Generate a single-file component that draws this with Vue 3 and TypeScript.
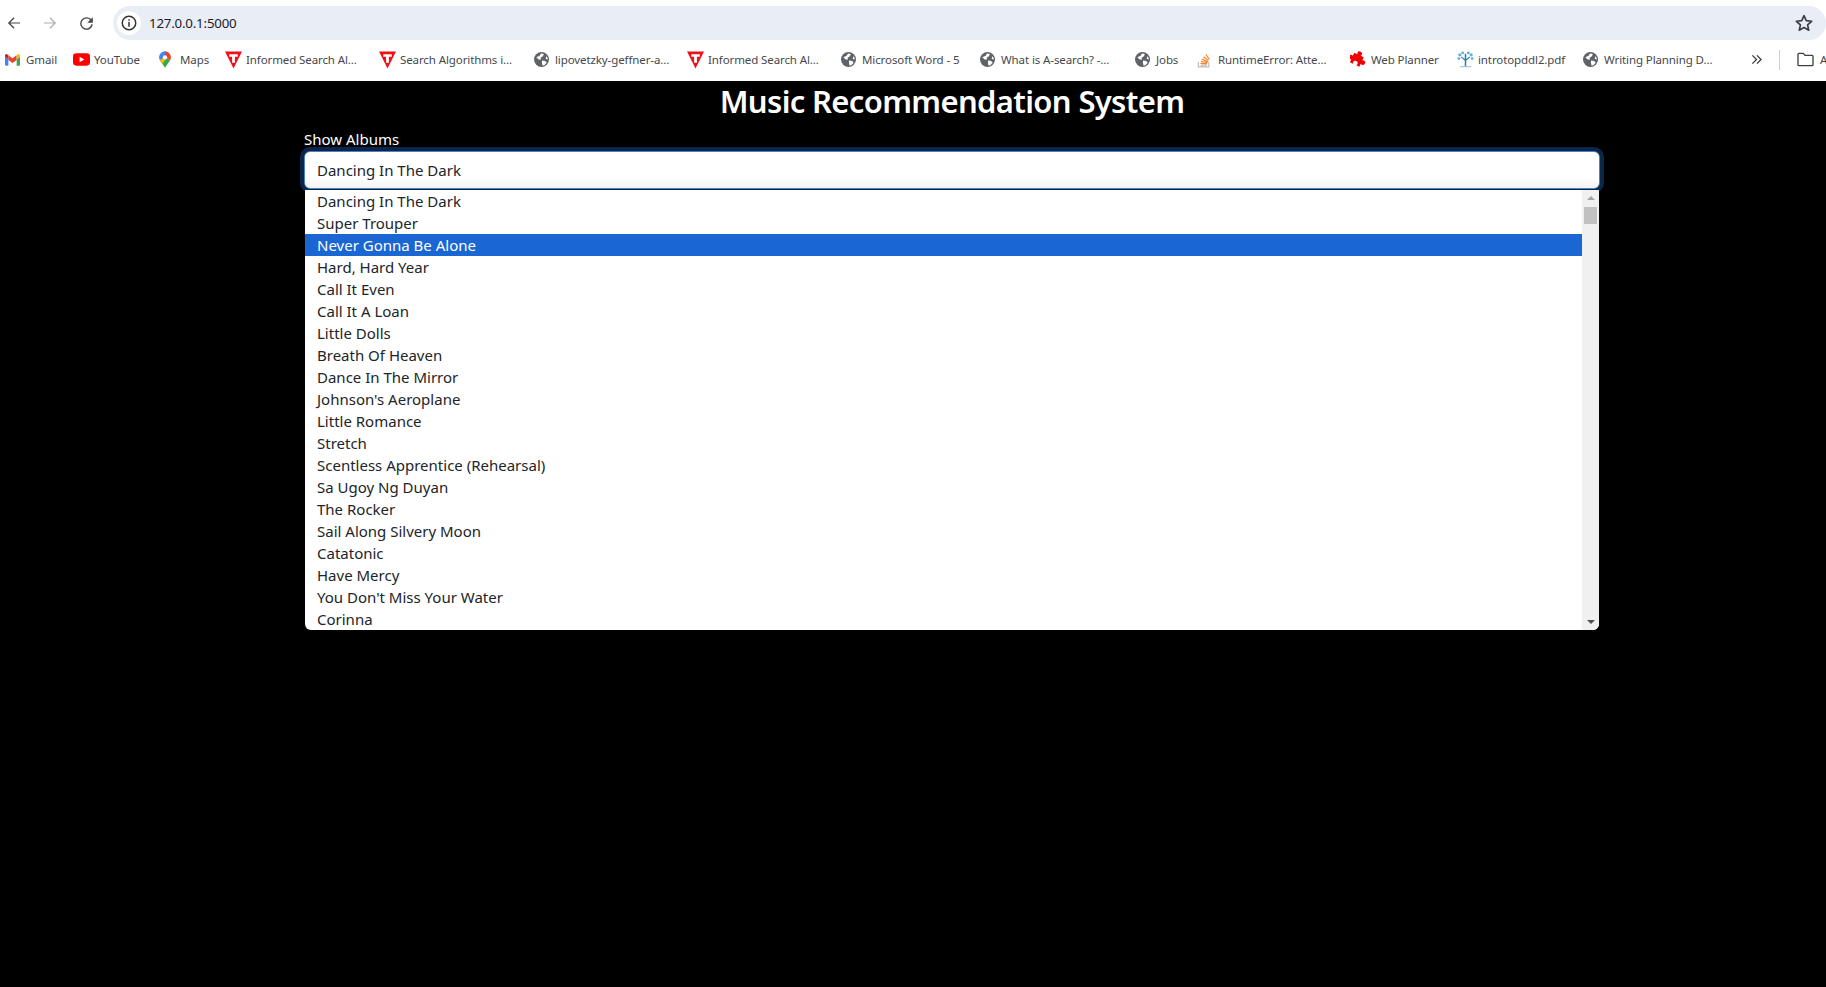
<script setup lang="ts">
type IconKind = 'gmail' | 'youtube' | 'maps' | 'triangle' | 'globe' | 'stack' | 'puzzle' | 'tree'
interface Bookmark { kind: IconKind; label: string; width: number }

const bookmarks: Bookmark[] = [
  { kind: 'gmail', label: 'Gmail', width: 68 },
  { kind: 'youtube', label: 'YouTube', width: 86 },
  { kind: 'maps', label: 'Maps', width: 66 },
  { kind: 'triangle', label: 'Informed Search Al...', width: 154 },
  { kind: 'triangle', label: 'Search Algorithms i...', width: 155 },
  { kind: 'globe', label: 'lipovetzky-geffner-a...', width: 153 },
  { kind: 'triangle', label: 'Informed Search Al...', width: 154 },
  { kind: 'globe', label: 'Microsoft Word - 5', width: 139 },
  { kind: 'globe', label: 'What is A-search? -...', width: 155 },
  { kind: 'globe', label: 'Jobs', width: 62 },
  { kind: 'stack', label: 'RuntimeError: Atte...', width: 153 },
  { kind: 'puzzle', label: 'Web Planner', width: 107 },
  { kind: 'tree', label: 'introtopddl2.pdf', width: 126 },
  { kind: 'globe', label: 'Writing Planning D...', width: 168 },
]

const albums: string[] = [
  'Dancing In The Dark', 'Super Trouper', 'Never Gonna Be Alone', 'Hard, Hard Year',
  'Call It Even', 'Call It A Loan', 'Little Dolls', 'Breath Of Heaven',
  'Dance In The Mirror', "Johnson's Aeroplane", 'Little Romance', 'Stretch',
  'Scentless Apprentice (Rehearsal)', 'Sa Ugoy Ng Duyan', 'The Rocker', 'Sail Along Silvery Moon',
  'Catatonic', 'Have Mercy', "You Don't Miss Your Water", 'Corinna',
]
const selectedIndex = 2
</script>

<template>
  <div class="page">
    <header class="chrome">
      <div class="toolbar">
        <button class="nav" aria-label="Back">
          <svg viewBox="0 0 24 24" width="18" height="18"><path d="M20 11.2H7.1l5.6-5.6L11.5 4.400 3.900 12l7.600 7.600 1.200-1.200-5.600-5.600H20z" fill="#474747"/></svg>
        </button>
        <button class="nav" aria-label="Forward">
          <svg viewBox="0 0 24 24" width="18" height="18"><path d="M4 11.200h12.900l-5.600-5.600 1.200-1.200 7.600 7.600-7.600 7.600-1.200-1.200 5.600-5.600H4z" fill="#b0b0b0"/></svg>
        </button>
        <button class="nav" aria-label="Reload">
          <svg viewBox="0 0 24 24" width="19" height="19"><path d="M17.700 6.300A8 8 0 1 0 20 13h-1.900a6.200 6.200 0 1 1-1.700-5.400L13 11h7V4z" fill="#474747"/></svg>
        </button>
        <div class="omnibox">
          <span class="site-info">
            <svg viewBox="0 0 24 24" width="18" height="18"><circle cx="12" cy="12" r="9" fill="none" stroke="#333" stroke-width="2"/><rect x="11" y="10.500" width="2" height="6.500" fill="#333"/><rect x="11" y="7" width="2" height="2" fill="#333"/></svg>
          </span>
          <span class="url">127.0.0.1:5000</span>
          <svg class="star" viewBox="0 0 24 24" width="20" height="20"><path d="M12 3.200l2.700 6 6.500.7-4.900 4.300 1.400 6.400L12 17.300l-5.700 3.300 1.400-6.400-4.900-4.300 6.500-.7z" fill="none" stroke="#3c4043" stroke-width="2" stroke-linejoin="round"/></svg>
        </div>
      </div>
      <nav class="bookmarks">
        <a v-for="(b, i) in bookmarks" :key="i" class="bookmark" :style="{ width: b.width + 'px' }">
          <span class="bm-icon">
            <svg v-if="b.kind === 'gmail'" viewBox="0 0 18 14" width="15" height="12">
              <path d="M0 3v9.500A1.500 1.500 0 0 0 1.500 14H4V6z" fill="#4285f4"/>
              <path d="M18 3v9.500a1.500 1.500 0 0 1-1.500 1.500H14V6z" fill="#34a853"/>
              <path d="M0 3l4 3V1.300L2.400.200A1.500 1.500 0 0 0 0 1.500z" fill="#c5221f"/>
              <path d="M4 1.300V7l5 3.700L14 7V1.300L9 5z" fill="#ea4335"/>
              <path d="M14 1.300V6l4-3V1.500A1.500 1.500 0 0 0 15.600.200z" fill="#fbbc04"/>
            </svg>
            <svg v-else-if="b.kind === 'youtube'" viewBox="0 0 18 13" width="17" height="13">
              <rect width="18" height="13" rx="3.500" fill="#f00"/>
              <path d="M7 3.700v5.600l5-2.800z" fill="#fff"/>
            </svg>
            <svg v-else-if="b.kind === 'maps'" viewBox="0 0 14 19" width="12" height="17">
              <path d="M7 0A7 7 0 0 0 1 10.500L7 6.800z" fill="#4285f4"/>
              <path d="M7 0a7 7 0 0 1 6 10.500L7 6.800z" fill="#ea4335"/>
              <path d="M1 10.500L7 19l6-8.500-6-3.700z" fill="#34a853"/>
              <path d="M1 10.500c1 1.500 2 2.600 3 4l5-7-2-.7z" fill="#fbbc04"/>
              <circle cx="7" cy="7" r="2.500" fill="#fff"/>
            </svg>
            <svg v-else-if="b.kind === 'triangle'" viewBox="0 0 18 18" width="17" height="18">
              <path d="M0 0h18L9 18z" fill="#f01018"/>
              <path d="M4.500 3h9v2.500h-3V12h-3V5.500h-3z" fill="#fff"/>
            </svg>
            <svg v-else-if="b.kind === 'globe'" viewBox="0 0 16 16" width="15" height="15">
              <circle cx="8" cy="8" r="8" fill="#5f6368"/>
              <path d="M2.500 5.500L6 4l1.500-2.500 3 .5-1 2.500-2.500 1.500.5 2H5zM8.500 9l3.500.5 1.500 2-2.500 2.500-2 .5-.5-3zM13 4.500l1.500 1.500v2l-2-.5z" fill="#fff"/>
            </svg>
            <svg v-else-if="b.kind === 'stack'" viewBox="0 0 16 18" width="14" height="17">
              <path d="M1.500 11.500v6h12v-6" fill="none" stroke="#bcbbbb" stroke-width="1.300"/>
              <path d="M4 15.500h7.500" stroke="#bcbbbb" stroke-width="1.300"/>
              <path d="M4 13.500l7.500.5M4.500 11l7.300 1.700M5.500 8.500l6.800 3.200M7.500 5.800l5.500 4.500M10 3l4.200 6" stroke="#f48024" stroke-width="1.400" fill="none"/>
            </svg>
            <svg v-else-if="b.kind === 'puzzle'" viewBox="0 0 18 18" width="17" height="17">
              <path d="M5 3a2.500 2.500 0 0 1 5 0l-.5 1.500H13V8l1.500-.5a2.500 2.500 0 0 1 0 5L13 12v3.500H9.500L10 14a2.500 2.500 0 0 0-5 0l.5 1.500H2V12L.8 12.500a2.400 2.400 0 0 1 0-4.800L2 8V4.500h3.500z" fill="#f00000" transform="rotate(25 9 9)"/>
            </svg>
            <svg v-else viewBox="0 0 18 18" width="17" height="17">
              <path d="M8.200 17V10L4 6.500l.8-.6 3.400 2.500V3h1.600v5.400l3.400-2.500.8.6L9.800 10v7z" fill="#2a7fa8"/>
              <circle cx="3" cy="4" r="1.700" fill="#5db3d5"/>
              <circle cx="15" cy="4" r="1.700" fill="#5db3d5"/>
              <circle cx="6" cy="2" r="1.500" fill="#5db3d5"/>
              <circle cx="12" cy="2" r="1.500" fill="#5db3d5"/>
              <circle cx="2" cy="8" r="1.500" fill="#5db3d5"/>
              <circle cx="16" cy="8" r="1.500" fill="#5db3d5"/>
              <rect x="3" y="16" width="12" height="1.200" fill="#9cc8dc"/>
            </svg>
          </span>
          <span class="bm-label">{{ b.label }}</span>
        </a>
        <svg class="more" viewBox="0 0 12 12" width="11" height="11"><path d="M1.500 1.500L6 6l-4.500 4.500M6.500 1.500L11 6l-4.500 4.500" fill="none" stroke="#3c4043" stroke-width="1.500"/></svg>
        <span class="sep"></span>
        <svg class="folder" viewBox="0 0 18 16" width="17" height="15"><path d="M1 2.500A1 1 0 0 1 2 1.500h4.500l2 2H16a1 1 0 0 1 1 1v9a1 1 0 0 1-1 1H2a1 1 0 0 1-1-1z" fill="none" stroke="#3c4043" stroke-width="1.400"/></svg>
        <span class="bm-label clipped">A</span>
      </nav>
    </header>

    <main class="content">
      <h1 class="title">Music Recommendation System</h1>
      <label class="field-label">Show Albums</label>
      <div class="select">Dancing In The Dark</div>
      <div class="dropdown">
        <ul class="options">
          <li
            v-for="(album, i) in albums"
            :key="album"
            class="option"
            :class="{ selected: i === selectedIndex }"
          >{{ album }}</li>
        </ul>
        <div class="scrollbar">
          <span class="arrow up"></span>
          <span class="thumb"></span>
          <span class="track"></span>
          <span class="arrow down"></span>
        </div>
      </div>
    </main>
  </div>
</template>

<style>
html, body { margin: 0; background: #000; overflow: hidden; }
</style>

<style scoped>
.page {
  width: 1826px;
  height: 987px;
  background: #000;
  overflow: hidden;
  font-family: "Noto Sans", "Open Sans", sans-serif;
}
.chrome { height: 81px; background: #fff; overflow: hidden; }
.toolbar {
  height: 40px;
  padding-top: 6px;
  box-sizing: border-box;
  display: flex;
  align-items: stretch;
}
.nav {
  width: 36px;
  padding: 0;
  border: 0;
  background: none;
  display: flex;
  align-items: center;
  justify-content: center;
}
.nav:first-child { margin-left: -4px; }
.omnibox {
  margin-left: 9px;
  flex: 1;
  display: flex;
  align-items: center;
  background: #e9edf6;
  border-radius: 17px;
  padding: 0 12px 0 4px;
}
.site-info {
  width: 24px;
  height: 24px;
  border-radius: 50%;
  background: #fff;
  display: flex;
  align-items: center;
  justify-content: center;
}
.url {
  margin-left: 8px;
  flex: 1;
  font-size: 13.300px;
  color: #202124;
  letter-spacing: -0.2px;
}
.bookmarks {
  height: 39px;
  padding-left: 5px;
  display: flex;
  align-items: center;
}
.bookmark { flex: none; display: flex; align-items: center; white-space: nowrap; overflow: hidden; }
.bm-icon {
  flex: none;
  width: 21px;
  display: flex;
  align-items: center;
}
.bm-label {
  font-size: 11.500px;
  color: #45484c;
  letter-spacing: -0.1px;
}
.more { flex: none; }
.sep { flex: none; width: 1px; height: 20px; background: #c7d3ea; margin: 0 17px; }
.folder { flex: none; }
.clipped { margin-left: 6px; }

.content {
  width: 1296px;
  margin-left: 304px;
}
.title {
  margin: 0;
  height: 40px;
  line-height: 40px;
  text-align: center;
  font-size: 31px;
  font-weight: 600;
  letter-spacing: -0.65px;
  color: #fff;
}
.field-label {
  display: block;
  margin-top: 8px;
  height: 22px;
  line-height: 20px;
  font-size: 15px;
  color: #fff;
}
.select {
  height: 38px;
  box-sizing: border-box;
  padding: 0 12px;
  line-height: 36px;
  font-size: 15px;
  color: #212529;
  background: linear-gradient(#fff 70%, #f3f3f3);
  border: 1px solid #4c7fc4;
  border-radius: 6px;
  box-shadow: 0 0 0 4px #0b2648;
}
.dropdown {
  position: relative;
  margin: 1px 1px 0;
  height: 440px;
  display: flex;
  background: #fff;
  border-radius: 0 0 6px 6px;
  overflow: hidden;
}
.options { flex: 1; margin: 0; padding: 0; list-style: none; }
.option {
  height: 22px;
  line-height: 22px;
  padding-left: 12px;
  font-size: 15px;
  color: #212529;
  white-space: nowrap;
}
.option.selected { background: #1a66d2; color: #fff; }
.scrollbar {
  flex: none;
  width: 17px;
  display: flex;
  flex-direction: column;
  align-items: center;
  background: #f0f0f0;
}
.arrow { flex: none; width: 0; height: 0; border-left: 4px solid transparent; border-right: 4px solid transparent; }
.arrow.up { margin-top: 6px; border-bottom: 4px solid #a3a3a3; }
.arrow.down { margin-bottom: 6px; border-top: 4px solid #505050; }
.thumb { flex: none; width: 13px; height: 17px; margin-top: 7px; background: #c1c1c1; }
.track { flex: 1; }
</style>
